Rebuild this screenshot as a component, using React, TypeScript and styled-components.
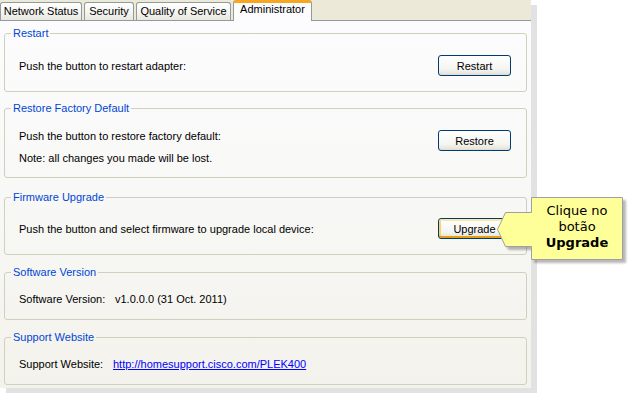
import React from "react";
import styled, { createGlobalStyle } from "styled-components";

const GlobalStyle = createGlobalStyle`
  html, body {
    margin: 0;
    padding: 0;
    background: #ffffff;
  }
  body {
    font-family: "Liberation Sans", Tahoma, Arial, sans-serif;
    font-size: 11px;
    color: #000000;
  }
`;

const Page = styled.div`
  position: relative;
  width: 630px;
  height: 397px;
  overflow: hidden;
`;

const Window = styled.div`
  width: 531px;
  display: flex;
  flex-direction: column;
  box-shadow: 6px 5px 0 #e2e2e2;
`;

const TabBar = styled.div`
  height: 20px;
  display: flex;
  align-items: flex-end;
  gap: 2px;
  background: #ece9d8;
  border-bottom: 1px solid #919b9c;
`;

const Tab = styled.div<{ $active?: boolean; $w: number }>`
  position: relative;
  box-sizing: border-box;
  width: ${(p) => p.$w}px;
  height: ${(p) => (p.$active ? 21 : 18)}px;
  margin-bottom: ${(p) => (p.$active ? -1 : 0)}px;
  padding-top: ${(p) => (p.$active ? 0 : 2)}px;
  border: 1px solid #919b9c;
  border-bottom: none;
  border-top: ${(p) => (p.$active ? "3px solid #f5a623" : "1px solid #919b9c")};
  border-radius: 3px 3px 0 0;
  background: ${(p) =>
    p.$active ? "#fcfcfe" : "linear-gradient(#ffffff, #f3f3ef 60%, #e8e7e0)"};
  line-height: 13px;
  text-align: center;
  white-space: nowrap;
`;

const Panel = styled.div`
  box-sizing: border-box;
  height: 367px;
  padding: 6px 4px 0 4px;
  display: flex;
  flex-direction: column;
  background: linear-gradient(#fcfcfe, #f8f8f6 45%, #f3f2ec);
`;

const Group = styled.fieldset<{ $mt: number }>`
  margin: ${(p) => p.$mt}px 0 0;
  padding: 0;
  min-width: 0;
  border: 1px solid #d0d0bf;
  border-radius: 3px;
`;

const Legend = styled.legend`
  margin-left: 6px;
  padding: 0 2px;
  color: #0046d5;
  line-height: 13px;
`;

const Body = styled.div<{ $pt: number; $pb: number }>`
  display: flex;
  align-items: flex-start;
  justify-content: space-between;
  padding: ${(p) => p.$pt}px 15px ${(p) => p.$pb}px 14px;
`;

const CenterBody = styled(Body)`
  align-items: center;
`;

const Lines = styled.div`
  display: flex;
  flex-direction: column;
  gap: 8px;
`;

const Line = styled.div`
  line-height: 14px;
  white-space: nowrap;
`;

const InfoRow = styled.div`
  display: flex;
  line-height: 14px;
  white-space: nowrap;
`;

const Label = styled.span<{ $w: number }>`
  width: ${(p) => p.$w}px;
`;

const SiteLink = styled.a`
  color: #0000ff;
  text-decoration: underline;
`;

const Button = styled.button<{ $focus?: boolean; $mt?: number }>`
  flex: none;
  width: 73px;
  height: 21px;
  margin-top: ${(p) => p.$mt ?? 0}px;
  padding: 0;
  border: 1px solid #003c74;
  border-radius: 3px;
  background: linear-gradient(#ffffff, #f4f4f0 70%, #e3e0d6);
  font: inherit;
  color: #000000;
  box-shadow: ${(p) =>
    p.$focus
      ? "inset 0 2px 0 #ffe7a2, inset 0 -2px 0 #e5a01a, inset 2px 0 0 #fbd36a, inset -2px 0 0 #f3b43a"
      : "inset 0 -1px 0 #e0ddd3"};
`;

const Callout = styled.div`
  position: absolute;
  left: 490px;
  top: 190px;
  width: 140px;
  height: 80px;
`;

const CalloutText = styled.div`
  position: absolute;
  left: 41px;
  top: 7px;
  width: 92px;
  height: 62px;
  box-sizing: border-box;
  padding-top: 6px;
  text-align: center;
  font-family: "DejaVu Sans", Verdana, sans-serif;
  font-size: 13px;
  line-height: 16px;
  color: #000000;

  b {
    font-weight: bold;
  }
`;

export default function App() {
  return (
    <Page>
      <GlobalStyle />
      <Window>
        <TabBar>
          <Tab $w={82}>Network Status</Tab>
          <Tab $w={50}>Security</Tab>
          <Tab $w={95}>Quality of Service</Tab>
          <Tab $w={79} $active>
            Administrator
          </Tab>
        </TabBar>
        <Panel>
          <Group $mt={0}>
            <Legend>Restart</Legend>
            <CenterBody $pt={15} $pb={15}>
              <Line>Push the button to restart adapter:</Line>
              <Button>Restart</Button>
            </CenterBody>
          </Group>

          <Group $mt={10}>
            <Legend>Restore Factory Default</Legend>
            <Body $pt={14} $pb={12}>
              <Lines>
                <Line>Push the button to restore factory default:</Line>
                <Line>Note: all changes you made will be lost.</Line>
              </Lines>
              <Button $mt={1}>Restore</Button>
            </Body>
          </Group>

          <Group $mt={13}>
            <Legend>Firmware Upgrade</Legend>
            <CenterBody $pt={14} $pb={15}>
              <Line>Push the button and select firmware to upgrade local device:</Line>
              <Button $focus>Upgrade</Button>
            </CenterBody>
          </Group>

          <Group $mt={11}>
            <Legend>Software Version</Legend>
            <Body $pt={13} $pb={13}>
              <InfoRow>
                <Label $w={96}>Software Version:</Label>
                <span>v1.0.0.0 (31 Oct. 2011)</span>
              </InfoRow>
            </Body>
          </Group>

          <Group $mt={11}>
            <Legend>Support Website</Legend>
            <Body $pt={13} $pb={13}>
              <InfoRow>
                <Label $w={94}>Support Website:</Label>
                <SiteLink href="#">http://homesupport.cisco.com/PLEK400</SiteLink>
              </InfoRow>
            </Body>
          </Group>
        </Panel>
      </Window>

      <Callout>
        <svg width="140" height="80" viewBox="0 0 140 80">
          <defs>
            <filter id="calloutShadow" x="-10%" y="-10%" width="130%" height="130%">
              <feDropShadow dx="3" dy="3" stdDeviation="1.2" floodColor="#000000" floodOpacity="0.28" />
            </filter>
          </defs>
          <polygon
            points="41.5,7.5 132.5,7.5 132.5,69.5 41.5,69.5 41.5,56.5 15.5,56.5 7.5,39.5 15.5,22.5 41.5,22.5"
            fill="#ffff99"
            stroke="#a0a0a0"
            strokeWidth="1"
            filter="url(#calloutShadow)"
          />
        </svg>
        <CalloutText>
          Clique no
          <br />
          botão
          <br />
          <b>Upgrade</b>
        </CalloutText>
      </Callout>
    </Page>
  );
}
